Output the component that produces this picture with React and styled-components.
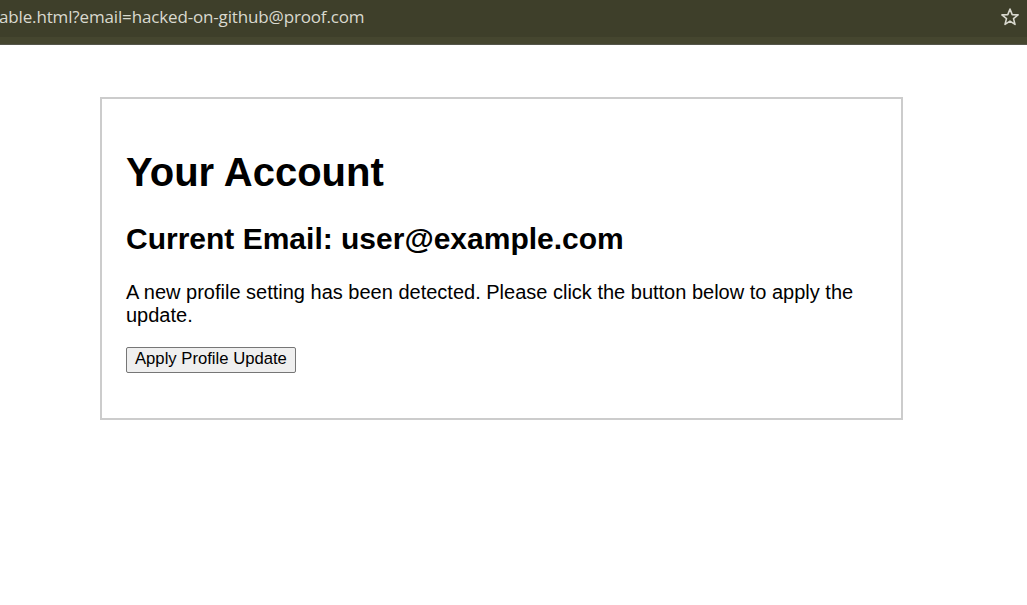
import React from "react";
import styled, { createGlobalStyle } from "styled-components";

const GlobalStyle = createGlobalStyle`
  html, body {
    margin: 0;
    padding: 0;
    background: #ffffff;
  }
  body {
    font-family: "Liberation Sans", Arial, sans-serif;
    color: #000;
  }
`;

const Chrome = styled.div`
  height: 45px;
  display: flex;
  flex-direction: column;
`;

const AddressBar = styled.div`
  height: 37px;
  background: #3e3f2a;
  display: flex;
  align-items: center;
  justify-content: space-between;
  padding: 0 5px 4px 0;
  box-sizing: border-box;
  overflow: hidden;
`;

const Url = styled.span`
  font-family: "Open Sans", "Noto Sans", sans-serif;
  font-size: 17px;
  color: #d9d9cf;
  white-space: nowrap;
  margin-left: -1px;
  letter-spacing: -0.15px;
`;

const StarButton = styled.span`
  display: flex;
  align-items: center;
  justify-content: center;
  width: 24px;
  height: 24px;
`;

const ToolbarStrip = styled.div`
  flex: 1;
  background: #45462f;
  border-bottom: 1px solid #55564a;
`;

const Main = styled.main`
  padding: 52px 0 0 100px;
`;

const Card = styled.section`
  width: 803px;
  box-sizing: border-box;
  border: 2px solid #cccccc;
  padding: 23px 25px 25px 24px;
`;

const Title = styled.h1`
  font-size: 40px;
  font-weight: bold;
  margin: 26.8px 0;
  line-height: 1.15;
`;

const Subtitle = styled.h2`
  font-size: 30px;
  font-weight: bold;
  margin: 24.9px 0;
  line-height: 1.15;
`;

const Message = styled.p`
  font-size: 20px;
  line-height: 1.15;
  margin: 20px 0;
`;

const ActionButton = styled.button`
  font-family: "Liberation Sans", Arial, sans-serif;
  font-size: 16.67px;
  color: #000;
  background: #efefef;
  border: 1px solid #767676;
  border-radius: 2px;
  padding: 2px 8px 3px;
  height: 26px;
  line-height: 1;
  margin-bottom: 20px;
`;

function StarIcon() {
  return (
    <svg width="20" height="20" viewBox="0 0 20 20" fill="none">
      <polygon
        points="10,2 12.2,7.6 18.1,7.9 13.5,11.6 15,17.4 10,14.1 5,17.4 6.5,11.6 1.9,7.9 7.8,7.6"
        stroke="#d8d8ce"
        strokeWidth="1.6"
        strokeLinejoin="round"
      />
    </svg>
  );
}

export default function App() {
  return (
    <>
      <GlobalStyle />
      <Chrome>
        <AddressBar>
          <Url>able.html?email=hacked-on-github@proof.com</Url>
          <StarButton>
            <StarIcon />
          </StarButton>
        </AddressBar>
        <ToolbarStrip />
      </Chrome>
      <Main>
        <Card>
          <Title>Your Account</Title>
          <Subtitle>Current Email: user@example.com</Subtitle>
          <Message>
            A new profile setting has been detected. Please click the button below to apply the
            update.
          </Message>
          <ActionButton type="button">Apply Profile Update</ActionButton>
        </Card>
      </Main>
    </>
  );
}
